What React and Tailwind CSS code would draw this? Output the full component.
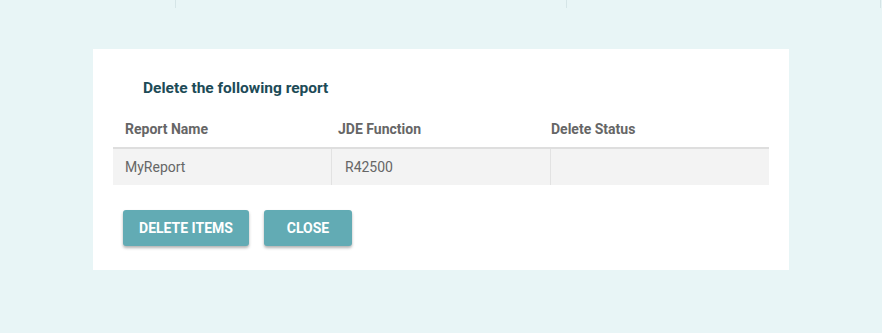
import React from 'react';

const rows = [{ name: 'MyReport', fn: 'R42500', status: '' }];

const App = () => {
    return (
        <div className="relative w-[882px] h-[333px] bg-[#e8f5f6] overflow-hidden font-['Roboto',sans-serif]">
            {/* faint column lines of the page behind the dialog */}
            <div className="absolute left-[175px] top-0 w-px h-[8px] bg-[#d5e5e7]"></div>
            <div className="absolute left-[566px] top-0 w-px h-[8px] bg-[#d5e5e7]"></div>
            <div className="absolute left-[880px] top-0 w-px h-[8px] bg-[#d5e5e7]"></div>

            <div className="pt-[49px] pl-[93px]">
                <div className="w-[696px] h-[221px] bg-white px-[20px] pt-[28px]">
                    <h3 className="pl-[30px] text-[15.5px] leading-[22px] font-bold text-[#1d4b57]">Delete the following report</h3>
                    <div className="mt-[12px] w-[656px]">
                        <div className="flex h-[38px] items-center border-b-2 border-[#dedede] text-[14px] font-bold text-[#666666]">
                            <div className="w-[213px] pl-[12px]">Report Name</div>
                            <div className="w-[213px] pl-[12px]">JDE Function</div>
                            <div className="flex-1 pl-[12px]">Delete Status</div>
                        </div>
                        {rows.map(row => (
                            <div key={row.name} className="flex h-[36px] items-center bg-[#f3f3f3] text-[14px] text-[#666666]">
                                <div className="w-[219px] h-full flex items-center pl-[12px] border-r border-[#e2e2e2]">{row.name}</div>
                                <div className="w-[219px] h-full flex items-center pl-[13px] border-r border-[#e2e2e2]">{row.fn}</div>
                                <div className="flex-1 h-full flex items-center pl-[12px]">{row.status}</div>
                            </div>
                        ))}
                    </div>
                    <div className="mt-[25px] ml-[10px] flex gap-[15px]">
                        <button className="h-[36px] w-[126px] rounded-[3px] bg-[#62abb4] text-white text-[14px] font-bold shadow-[0_2px_3px_rgba(0,0,0,0.3)]">DELETE ITEMS</button>
                        <button className="h-[36px] w-[88px] rounded-[3px] bg-[#62abb4] text-white text-[14px] font-bold shadow-[0_2px_3px_rgba(0,0,0,0.3)]">CLOSE</button>
                    </div>
                </div>
            </div>
        </div>
    );
};

export default App;
